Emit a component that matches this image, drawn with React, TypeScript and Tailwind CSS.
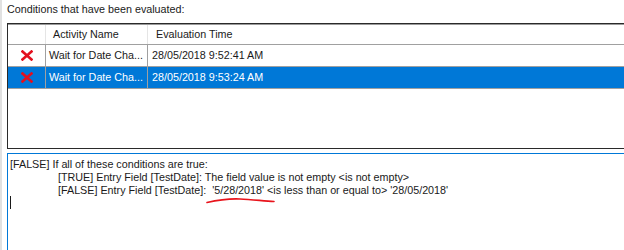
import React from 'react';

const rows = [
    { name: 'Wait for Date Cha...', time: '28/05/2018 9:52:41 AM', selected: false },
    { name: 'Wait for Date Cha...', time: '28/05/2018 9:53:24 AM', selected: true },
];

const RedX = () => (
    <svg width="12" height="11" viewBox="0 0 12 11">
        <path d="M1.5 1.5 L10.5 9.5 M10.5 1.5 L1.5 9.5" stroke="#e3101e" strokeWidth="2.6" strokeLinecap="square" />
    </svg>
);

export default function App() {
    return (
        <div
            className="w-[624px] h-[250px] overflow-hidden bg-white border-l-2 border-[#e1e1e1] pl-[5px] text-[10.75px] text-[#1a1a1a] leading-[13px]"
            style={{ fontFamily: '"Liberation Sans", Arial, sans-serif' }}
        >
            <div className="h-[23px] pt-[3px]">Conditions that have been evaluated:</div>

            {/* list view */}
            <div className="w-[700px] h-[126px] border border-[#2a2a2a] bg-white">
                <div className="flex h-[21px] border-b border-[#a0a0a0] border-t border-t-[#9a9a9a]">
                    <div className="w-[38px] border-r border-[#e5e5e5]" />
                    <div className="w-[102px] border-r border-[#e5e5e5] pl-[7px] flex items-center">Activity Name</div>
                    <div className="flex-1 pl-[8px] flex items-center">Evaluation Time</div>
                </div>
                {rows.map((r, i) => (
                    <div
                        key={i}
                        className={
                            'flex h-[22px] border-b border-[#a0a0a0] ' +
                            (r.selected ? 'bg-[#0078d7] text-white' : 'bg-white')
                        }
                    >
                        <div className="w-[38px] border-r border-[#a0a0a0] flex items-center justify-center pl-[1px]">
                            <RedX />
                        </div>
                        <div className="w-[102px] border-r border-[#a0a0a0] pl-[3px] flex items-center">{r.name}</div>
                        <div className="flex-1 pl-[4px] flex items-center">{r.time}</div>
                    </div>
                ))}
            </div>

            {/* details text box */}
            <div className="mt-[4px] w-[700px] h-[120px] border border-[#0078d7] pl-[2px] pt-[4px]">
                <div>[FALSE] If all of these conditions are true:</div>
                <div className="pl-[48px]">[TRUE] Entry Field [TestDate]: The field value is not empty &lt;is not empty&gt;</div>
                <div className="pl-[48px] whitespace-pre">
                    [FALSE] Entry Field [TestDate]:{'  '}
                    <span className="relative">
                        '5/28/2018'
                        <svg className="absolute left-[-6px] top-[13px]" width="70" height="8" viewBox="0 0 70 8">
                            <path d="M1 5.5 C 12 3, 22 1.5, 34 2 C 46 2.5, 58 4, 68 4.5" stroke="#e8141c" strokeWidth="1.6" fill="none" strokeLinecap="round" />
                        </svg>
                    </span>{' '}
                    &lt;is less than or equal to&gt; '28/05/2018'
                </div>
                <div className="h-[13px] w-px bg-[#1a1a1a] mt-[-1px]" />
            </div>
        </div>
    );
}
